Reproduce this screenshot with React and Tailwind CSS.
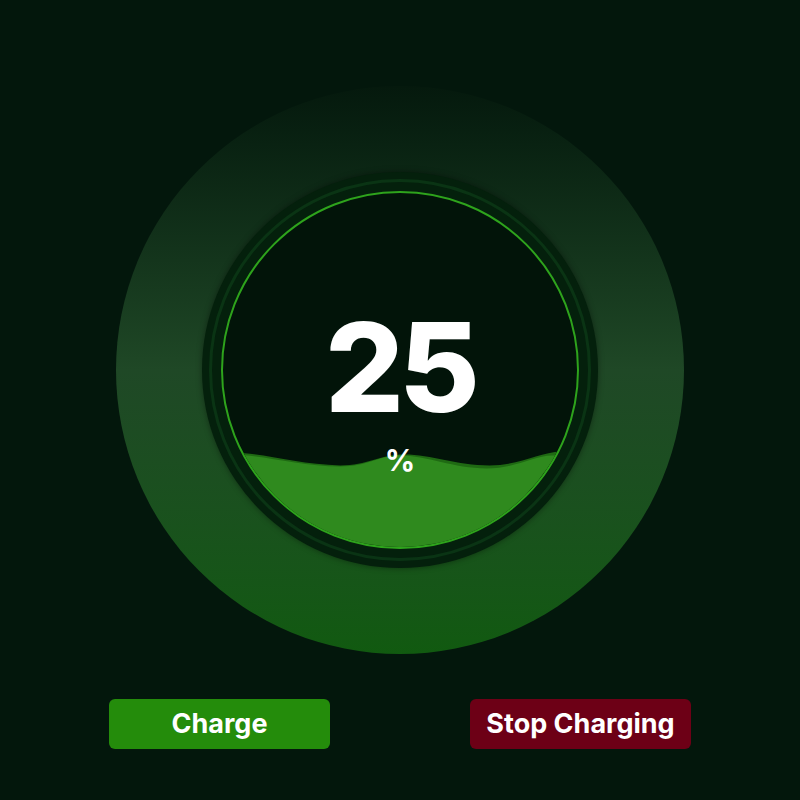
import React from "react"

// Wave fill inside the gauge (coords match a 356px circle)
const Wave = () => (
  <svg className="absolute inset-0 h-full w-full" viewBox="0 0 356 356" preserveAspectRatio="none">
    <path
      d="M0,262 C30,258 70,273 118,274 C145,274 158,263 182,263 C210,263 235,274 268,274 C298,274 318,261 340,260 C348,260 352,259 356,259 L356,356 L0,356 Z"
      fill="#1f6a13"
    />
    <path
      d="M0,264 C30,260 72,275 118,275 C146,275 156,264 178,264 C205,264 232,277 265,277 C295,277 312,264 331,264 C345,264 352,262 356,262 L356,356 L0,356 Z"
      fill="#2f8a1e"
    />
  </svg>
)

export default function App() {
  const level = 25

  return (
    <div
      className="flex h-screen w-full flex-col items-center bg-[#03170c] pt-[86px]"
      style={{ fontFamily: "Inter, 'Open Sans', sans-serif" }}
    >
      {/* Outer glow disc */}
      <div className="flex h-[568px] w-[568px] items-center justify-center rounded-full bg-linear-to-b from-[#05190d] via-[#1f4826] to-[#115a10]">
        {/* Dark ring */}
        <div className="flex h-[396px] w-[396px] items-center justify-center rounded-full bg-[#04200c] shadow-[0_0_6px_rgba(0,0,0,0.4)]">
          <div className="flex h-[382px] w-[382px] items-center justify-center rounded-full border-[3px] border-[#0a3414]">
            {/* Gauge */}
            <div className="relative flex h-[358px] w-[358px] flex-col items-center overflow-hidden rounded-full border-2 border-[#2ea31c] bg-[#021409]">
              <Wave />
              <span className="relative mt-[112px] text-[124px] leading-none font-extrabold tracking-[-5px] text-white">
                {level}
              </span>
              <span className="relative mt-[16px] text-[30px] leading-none font-bold text-white">%</span>
            </div>
          </div>
        </div>
      </div>

      {/* Actions */}
      <div className="mt-[45px] flex w-full justify-between px-[109px]">
        <button className="h-[50px] w-[221px] rounded-md bg-[#248c0b] text-[27px] font-bold text-white">
          Charge
        </button>
        <button className="h-[50px] w-[221px] rounded-md bg-[#6d0016] text-[27px] font-bold text-white">
          Stop Charging
        </button>
      </div>
    </div>
  )
}
